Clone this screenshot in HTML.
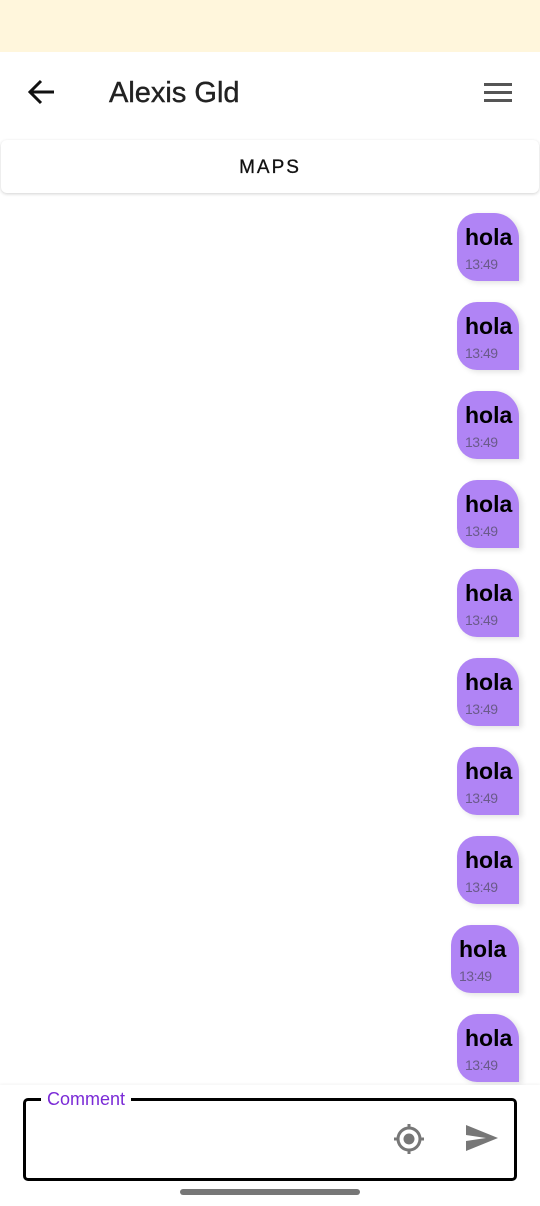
<!DOCTYPE html>
<html><head><meta charset="utf-8"><style>
*{margin:0;padding:0;box-sizing:border-box}
body{width:540px;height:1206px;background:#fff;font-family:"Liberation Sans",sans-serif;position:relative;overflow:hidden}
.status{position:absolute;top:0;left:0;width:540px;height:52px;background:#fff6dc}
.hdr{position:absolute;top:52px;left:0;width:540px;height:86px;background:#fff}
.title{position:absolute;left:109px;top:25px;font-size:29px;color:#222;-webkit-text-stroke:0.4px #222}
.maps{position:absolute;left:1px;top:140px;width:538px;height:53px;border-radius:6px;background:#fff;box-shadow:0 1px 3px rgba(0,0,0,.18);text-align:center;line-height:55px;font-size:19px;letter-spacing:2px;color:#111;-webkit-text-stroke:0.3px #111}
.b{position:absolute;width:62px;height:68px;background:#b084f5;border-radius:20px 25px 0 20px;box-shadow:3px 2px 6px rgba(0,0,0,.12)}
.b .h{position:absolute;left:8px;top:11px;font-size:23px;font-weight:bold;color:#000}
.b .t{position:absolute;left:8px;top:43px;font-size:14px;color:#6a5a8a;letter-spacing:-.5px}
.bottom{position:absolute;top:1085px;left:0;width:540px;height:121px;background:#fff;box-shadow:0 -1px 3px rgba(0,0,0,.05)}
.field{position:absolute;left:23px;top:1098px;width:494px;height:83px;border:3px solid #000;border-radius:5px}
.lbl{position:absolute;left:41px;top:1089px;background:#fff;padding:0 6px;font-size:18px;color:#7a2ad6}
.bar{position:absolute;left:180px;top:1189px;width:180px;height:6px;border-radius:3px;background:#777}
</style></head><body>
<div class="status"></div>
<div class="hdr">
<svg style="position:absolute;left:27px;top:27px" width="30" height="26" viewBox="0 0 30 26"><path d="M27 13H4M14 2L3 13l11 11" stroke="#111" stroke-width="3" fill="none"/></svg>
<div class="title">Alexis Gld</div>
<svg style="position:absolute;left:484px;top:30px" width="28" height="22"><rect y="1" width="28" height="3" fill="#555"/><rect y="9" width="28" height="3" fill="#555"/><rect y="17" width="28" height="3" fill="#555"/></svg>
</div>
<div class="maps">MAPS</div>
<div class="b" style="left:457px;top:213px"><div class="h">hola</div><div class="t">13:49</div></div>
<div class="b" style="left:457px;top:302px"><div class="h">hola</div><div class="t">13:49</div></div>
<div class="b" style="left:457px;top:391px"><div class="h">hola</div><div class="t">13:49</div></div>
<div class="b" style="left:457px;top:480px"><div class="h">hola</div><div class="t">13:49</div></div>
<div class="b" style="left:457px;top:569px"><div class="h">hola</div><div class="t">13:49</div></div>
<div class="b" style="left:457px;top:658px"><div class="h">hola</div><div class="t">13:49</div></div>
<div class="b" style="left:457px;top:747px"><div class="h">hola</div><div class="t">13:49</div></div>
<div class="b" style="left:457px;top:836px"><div class="h">hola</div><div class="t">13:49</div></div>
<div class="b" style="left:451px;top:925px;width:68px"><div class="h">hola</div><div class="t">13:49</div></div>
<div class="b" style="left:457px;top:1014px"><div class="h">hola</div><div class="t">13:49</div></div>
<div class="bottom"></div>
<div class="field"></div>
<div class="lbl">Comment</div>
<svg style="position:absolute;left:392px;top:1122px" width="34" height="34" viewBox="0 0 34 34"><circle cx="17" cy="17" r="11" stroke="#777" stroke-width="3" fill="none"/><circle cx="17" cy="17" r="5.5" fill="#777"/><path d="M17 2v5M17 27v5M2 17h5M27 17h5" stroke="#777" stroke-width="3"/></svg>
<svg style="position:absolute;left:465px;top:1123px" width="34" height="30" viewBox="0 0 34 30"><path d="M1 2L33 15 1 28V18l20-3-20-3z" fill="#777"/></svg>
<div class="bar"></div>
</body></html>
